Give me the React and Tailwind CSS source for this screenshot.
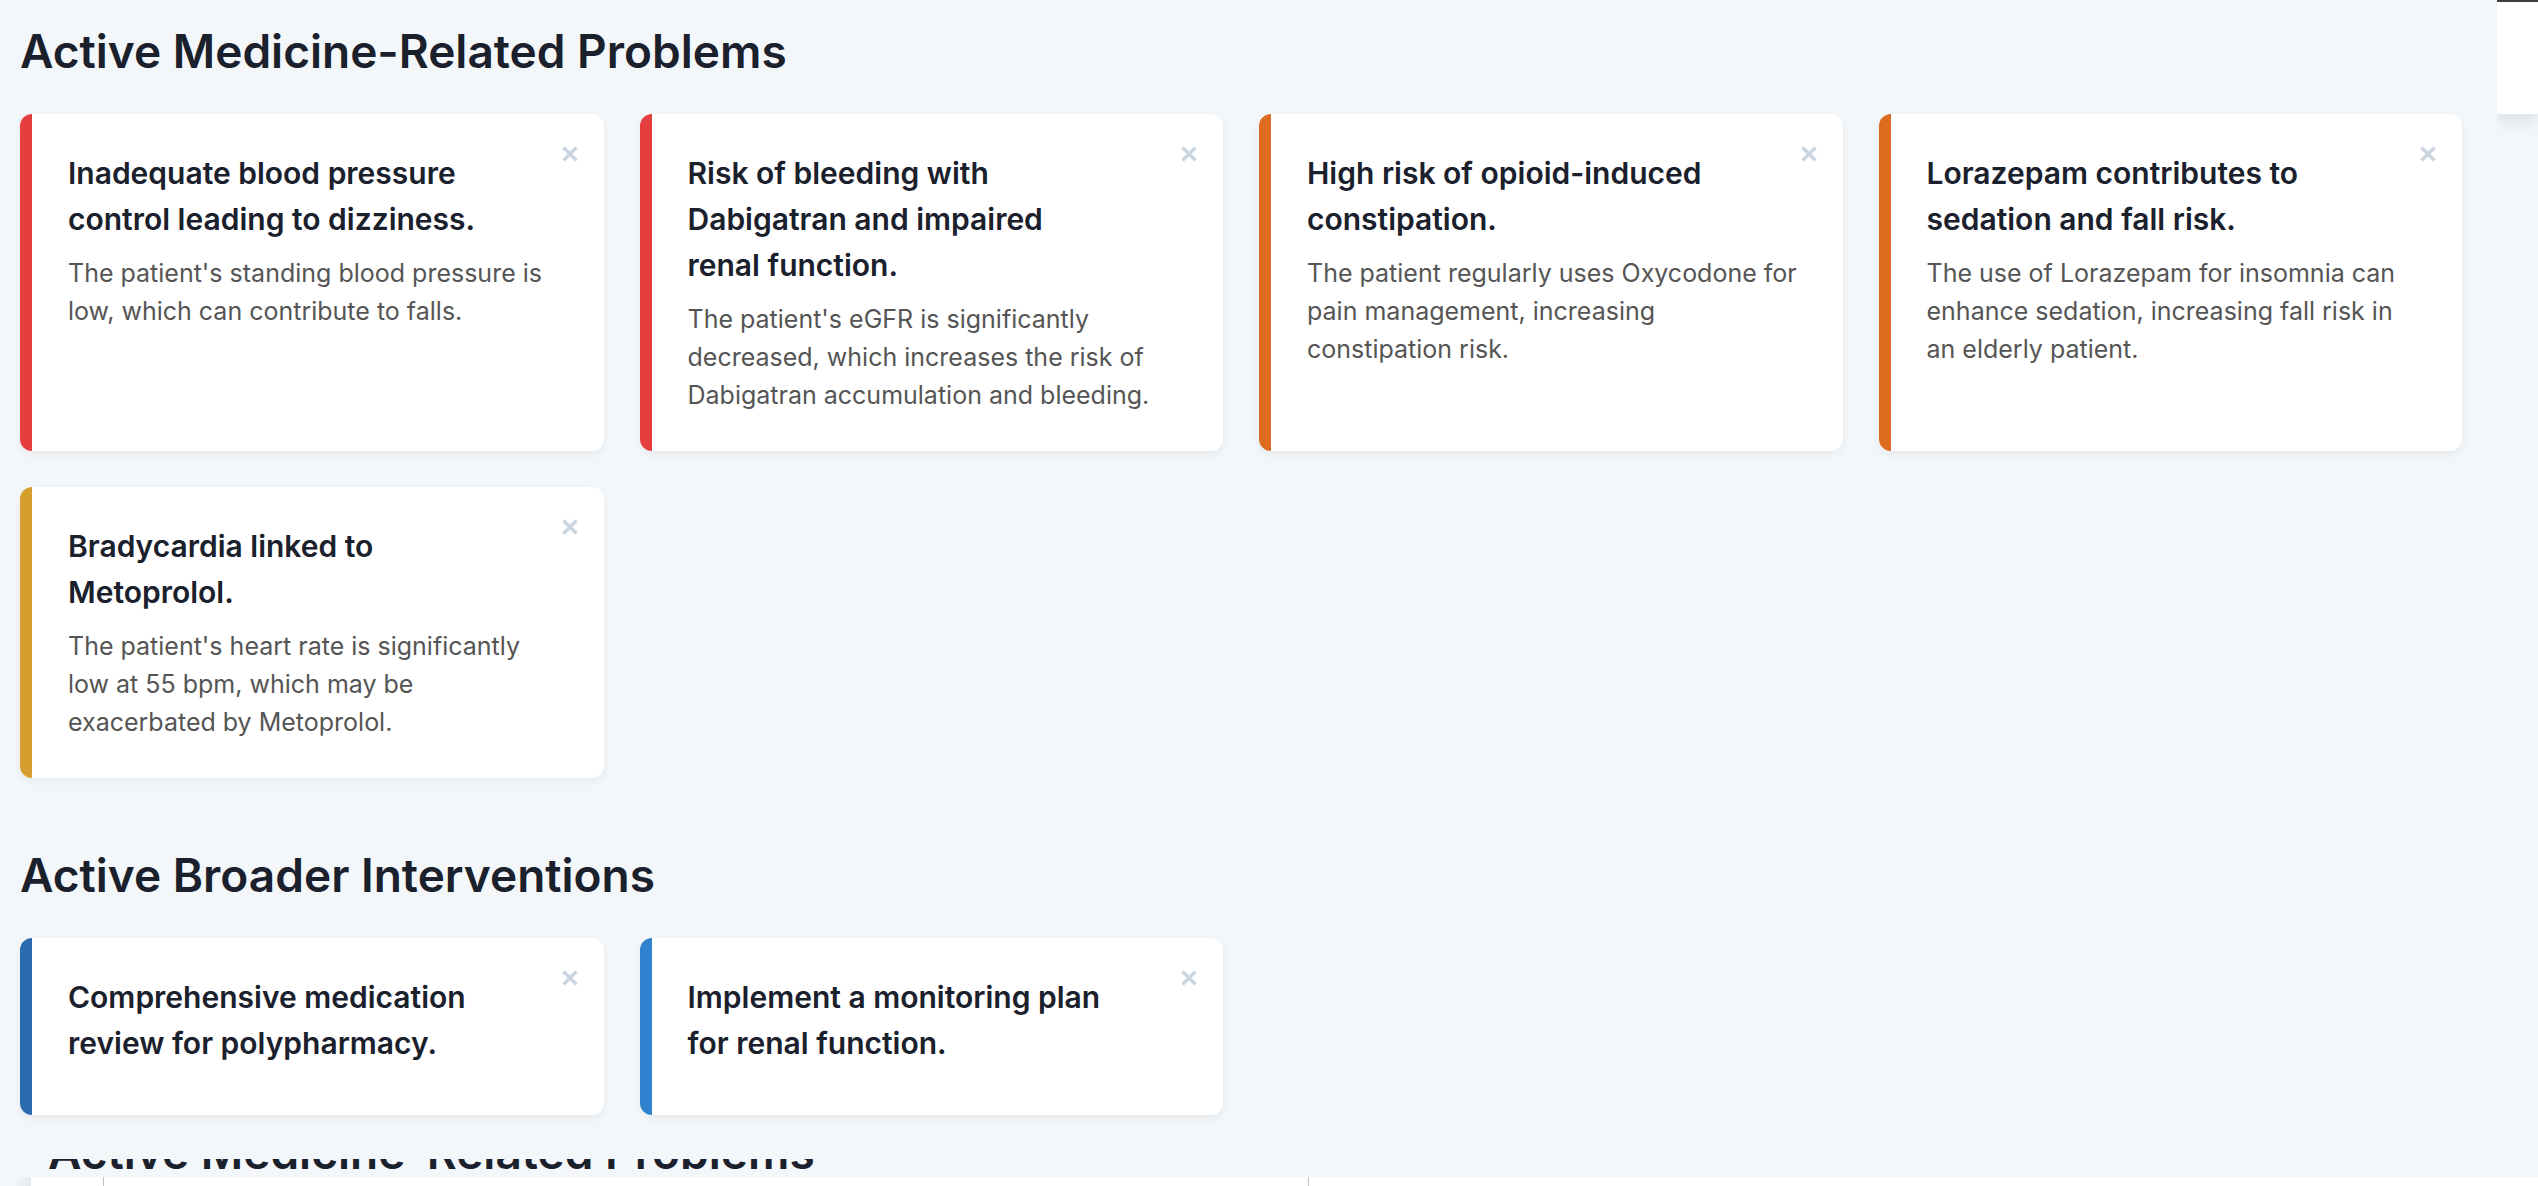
const problems = [
  {
    accent: "bg-[#e53e3e]",
    title: ["Inadequate blood pressure", "control leading to dizziness."],
    body: ["The patient's standing blood pressure is", "low, which can contribute to falls."],
  },
  {
    accent: "bg-[#e53e3e]",
    title: ["Risk of bleeding with", "Dabigatran and impaired", "renal function."],
    body: [
      "The patient's eGFR is significantly",
      "decreased, which increases the risk of",
      "Dabigatran accumulation and bleeding.",
    ],
  },
  {
    accent: "bg-[#dd6b20]",
    title: ["High risk of opioid-induced", "constipation."],
    body: ["The patient regularly uses Oxycodone for", "pain management, increasing", "constipation risk."],
  },
  {
    accent: "bg-[#dd6b20]",
    title: ["Lorazepam contributes to", "sedation and fall risk."],
    body: ["The use of Lorazepam for insomnia can", "enhance sedation, increasing fall risk in", "an elderly patient."],
  },
  {
    accent: "bg-[#d69e2e]",
    title: ["Bradycardia linked to", "Metoprolol."],
    body: ["The patient's heart rate is significantly", "low at 55 bpm, which may be", "exacerbated by Metoprolol."],
  },
];

const interventions = [
  { accent: "bg-[#2b6cb0]", title: ["Comprehensive medication", "review for polypharmacy."] },
  { accent: "bg-[#3182ce]", title: ["Implement a monitoring plan", "for renal function."] },
];

function Lines({ lines }) {
  return lines.map((line) => (
    <span key={line} className="block whitespace-nowrap">
      {line}{" "}
    </span>
  ));
}

function Card({ accent, title, body }) {
  return (
    <article className="relative flex overflow-hidden rounded-xl bg-white shadow-[0_3px_9px_rgba(0,0,0,0.06)]">
      <div className={`w-3 shrink-0 ${accent}`} />
      <div className="min-w-0 flex-1 px-9 pt-9 pb-[37px]">
        <h3 className="mb-3 text-[30px] leading-[46px] font-semibold text-[#1a202c]">
          <Lines lines={title} />
        </h3>
        {body && (
          <p className="text-[25px] leading-[38px] text-[#555]">
            <Lines lines={body} />
          </p>
        )}
      </div>
      <button
        type="button"
        aria-label={`Dismiss: ${title.join(" ")}`}
        className="absolute top-6 right-6 flex h-8 w-5 items-center justify-center text-[#cbd5e0]"
      >
        <svg viewBox="0 0 16 16" className="h-4 w-4" stroke="currentColor" strokeWidth="3.4">
          <path d="M1.5 1.5 14.5 14.5M14.5 1.5 1.5 14.5" />
        </svg>
      </button>
    </article>
  );
}

function Section({ title, cards }) {
  return (
    <section>
      <h2 className="mb-7 text-[46px] leading-[70px] font-semibold text-[#1a202c]">{title}</h2>
      <div className="grid grid-cols-4 gap-9">
        {cards.map((card) => (
          <Card key={card.title[0]} {...card} />
        ))}
      </div>
    </section>
  );
}

export default function App() {
  return (
    <div className="flex h-screen flex-col overflow-hidden bg-[#f3f7fa] font-['Inter','Open_Sans',sans-serif]">
      <div className="flex shrink-0">
        <main className="flex flex-1 flex-col gap-[62px] pt-4 pr-[35px] pb-11 pl-5">
          <Section title="Active Medicine-Related Problems" cards={problems} />
          <Section title="Active Broader Interventions" cards={interventions} />
        </main>
        <aside className="w-[41px] shrink-0 overflow-hidden">
          <div className="h-[115px] border-t-2 border-b border-t-[#3f3d45] border-b-[#e2e8f0] bg-white shadow-[0_6px_18px_rgba(0,0,0,0.1)]" />
        </aside>
      </div>
      <div className="flex h-[18px] shrink-0 items-end overflow-hidden pl-12">
        <h2 className="text-[46px] leading-[50px] font-semibold text-[#1a202c]">Active Medicine-Related Problems</h2>
      </div>
      <div className="flex flex-1 overflow-hidden">
        <div className="w-[31px] bg-linear-to-r from-[#f3f7fa] from-40% to-[#e6eaed]" />
        <div className="w-[73px] border-r border-[#c4c4c4] bg-white" />
        <div className="w-[1205px] border-r border-[#c4c4c4] bg-white" />
        <div className="flex-1 bg-white" />
      </div>
    </div>
  );
}
